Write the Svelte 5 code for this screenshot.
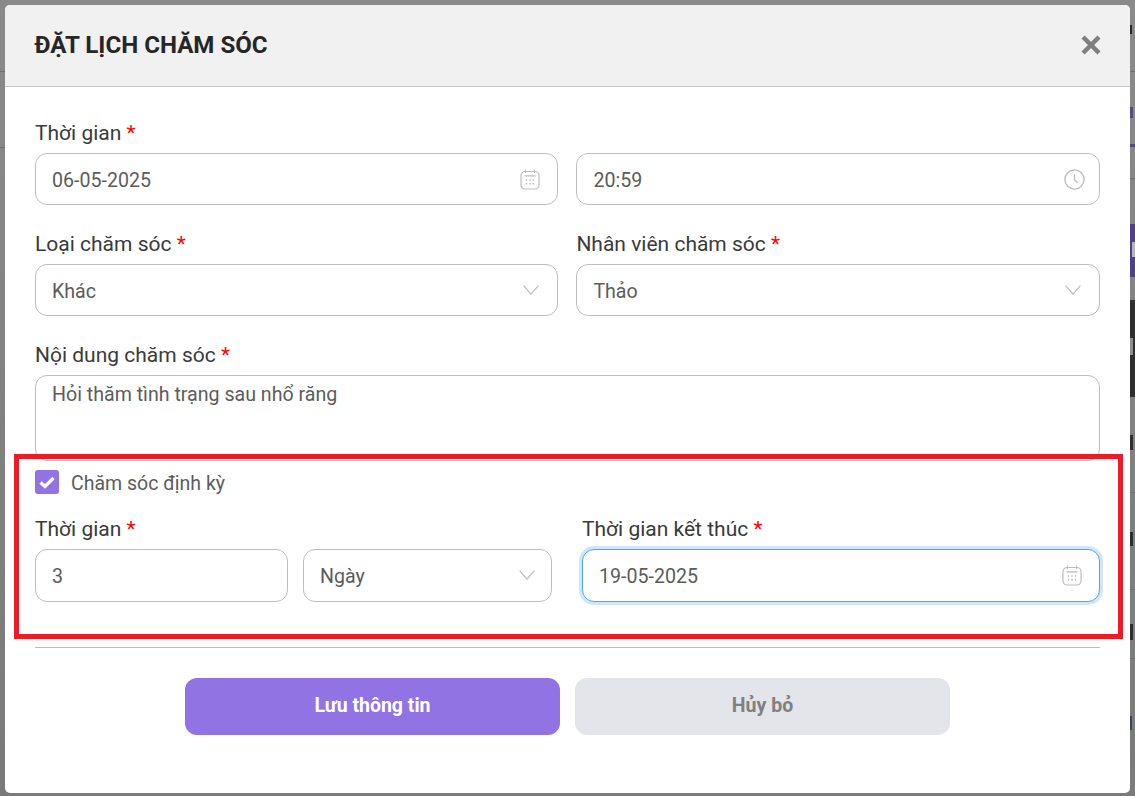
<script>
  const close = () => {};
</script>

{#snippet calendar()}
  <svg class="icon" width="20" height="21" viewBox="0 0 20 21" fill="none" stroke="#bdbdbd" stroke-width="1.2">
    <rect x="1" y="2.5" width="18" height="17.5" rx="4" />
    <path d="M5.5 .6v3.4M14.5 .6v3.4M4.5 6.8h11" />
    <path d="M5.8 11h8.4M5.8 14.8h8.4" stroke-width="1.5" stroke-dasharray="1.4 2.1" />
  </svg>
{/snippet}

{#snippet chevron()}
  <svg class="icon chevron" width="16" height="10" viewBox="0 0 16 10" fill="none" stroke="#bdbdbd" stroke-width="1.2">
    <path d="M.6 .6 8 9.2l7.4-8.6" />
  </svg>
{/snippet}

<div class="backdrop">
  <div class="modal">
    <header class="modal-head">
      <h2>ĐẶT LỊCH CHĂM SÓC</h2>
      <button class="close" onclick={close} aria-label="Đóng">
        <svg width="20" height="20" viewBox="0 0 20 20" fill="none" stroke="#7f7f7f" stroke-width="4.4" stroke-linecap="square">
          <path d="M3.6 3.6l12.8 12.8M16.4 3.6L3.6 16.4" />
        </svg>
      </button>
    </header>

    <div class="modal-body">
      <div class="field">
        <span class="label">Thời gian <i>*</i></span>
        <div class="two">
          <div class="input"><span>06-05-2025</span>{@render calendar()}</div>
          <div class="input">
            <span>20:59</span>
            <svg class="icon clock" width="21" height="21" viewBox="0 0 21 21" fill="none" stroke="#bdbdbd" stroke-width="1.4">
              <circle cx="10.5" cy="10.5" r="9.6" />
              <path d="M10.5 5v6l3.4 2.6" />
            </svg>
          </div>
        </div>
      </div>

      <div class="two">
        <div class="field">
          <span class="label">Loại chăm sóc <i>*</i></span>
          <div class="input"><span>Khác</span>{@render chevron()}</div>
        </div>
        <div class="field">
          <span class="label">Nhân viên chăm sóc <i>*</i></span>
          <div class="input"><span>Thảo</span>{@render chevron()}</div>
        </div>
      </div>

      <div class="field">
        <span class="label">Nội dung chăm sóc <i>*</i></span>
        <div class="input area"><span>Hỏi thăm tình trạng sau nhổ răng</span></div>
      </div>

      <div class="periodic">
        <div class="check-row">
          <span class="checkbox">
            <svg width="16" height="13" viewBox="0 0 16 13" fill="none" stroke="#fff" stroke-width="3.4">
              <path d="M1.5 6.5l4.5 4 8.5-8.5" />
            </svg>
          </span>
          <span class="check-text">Chăm sóc định kỳ</span>
        </div>
        <div class="period-row">
          <div class="field">
            <span class="label">Thời gian <i>*</i></span>
            <div class="pair">
              <div class="input tall"><span>3</span></div>
              <div class="input tall"><span>Ngày</span>{@render chevron()}</div>
            </div>
          </div>
          <div class="field">
            <span class="label">Thời gian kết thúc <i>*</i></span>
            <div class="input tall focused"><span>19-05-2025</span>{@render calendar()}</div>
          </div>
        </div>
      </div>

      <div class="actions">
        <button class="btn primary">Lưu thông tin</button>
        <button class="btn muted">Hủy bỏ</button>
      </div>
    </div>
  </div>
</div>

<style>
  :global(body) {
    margin: 0;
    font-family: Roboto, "Liberation Sans", sans-serif;
  }

  /* the page behind the modal only shows as thin strips along the edges */
  .backdrop {
    width: 1135px;
    height: 796px;
    box-sizing: border-box;
    padding: 5px 5px 3px;
    overflow: hidden;
    background:
      linear-gradient(#22262e, #22262e) 1130px 25px / 2px 9px no-repeat,
      linear-gradient(#6f6f6f, #6f6f6f) 0 71px / 100% 1px no-repeat,
      linear-gradient(#544a86, #544a86) 1130px 107px / 3px 11px no-repeat,
      linear-gradient(#55488f, #55488f) 1130px 144px / 5px 3px no-repeat,
      linear-gradient(#6f6f6f, #6f6f6f) 0 147px / 5px 1px no-repeat,
      linear-gradient(#6f6f6f, #6f6f6f) 1130px 178px / 5px 1px no-repeat,
      linear-gradient(#b5b5b5, #b5b5b5) 1132px 242px / 3px 15px no-repeat,
      linear-gradient(#4f3f8f, #4f3f8f) 1130px 224px / 5px 53px no-repeat,
      linear-gradient(#8e8e8e, #8e8e8e) 1130px 338px / 3px 17px no-repeat,
      linear-gradient(#2e2e2e, #2e2e2e) 1130px 300px / 5px 97px no-repeat,
      linear-gradient(#2e2e2e, #2e2e2e) 1130px 435px / 3px 15px no-repeat,
      linear-gradient(#6f6f6f, #6f6f6f) 1130px 492px / 5px 1px no-repeat,
      linear-gradient(#2e2e2e, #2e2e2e) 1130px 532px / 3px 14px no-repeat,
      linear-gradient(#6f6f6f, #6f6f6f) 1130px 589px / 5px 1px no-repeat,
      linear-gradient(#2e2e2e, #2e2e2e) 1130px 624px / 3px 16px no-repeat,
      linear-gradient(#6f6f6f, #6f6f6f) 1130px 658px / 5px 1px no-repeat,
      linear-gradient(#37465c, #37465c) 1130px 716px / 2px 14px no-repeat,
      linear-gradient(#8a8a8a, #7f807f 60%, #7a7a7a);
  }

  .modal {
    height: 100%;
    background: #fff;
    border-radius: 5px;
    overflow: hidden;
  }

  .modal-head {
    height: 82px;
    box-sizing: border-box;
    border-bottom: 1px solid #c4c4c4;
    background: #f1f1f1;
    padding: 0 29px 2px 29.5px;
    display: flex;
    align-items: center;
    justify-content: space-between;
  }

  h2 {
    margin: 0;
    font-size: 24.1px;
    font-weight: 700;
    color: #262626;
  }

  .close {
    border: 0;
    padding: 0;
    background: none;
    display: flex;
  }

  .modal-body {
    padding: 34px 30px 0;
    display: flex;
    flex-direction: column;
    gap: 27px;
  }

  .field {
    display: flex;
    flex-direction: column;
    gap: 8px;
  }

  .label {
    font-size: 21px;
    line-height: 24px;
    color: #3a3a3a;
  }

  .label i {
    font-style: normal;
    color: #f00;
  }

  .two {
    display: grid;
    grid-template-columns: 523.4px 1fr;
    gap: 18px;
  }

  .input {
    height: 52px;
    box-sizing: border-box;
    border: 1px solid #bdbdbd;
    border-radius: 12px;
    padding: 0 17px 0 16px;
    display: flex;
    align-items: center;
    justify-content: space-between;
    font-size: 19.6px;
    color: #5c5c5c;
    background: #fff;
  }

  .input > span {
    padding-top: 2px;
  }

  .tall {
    height: 53px;
  }

  .area {
    height: 86px;
    align-items: flex-start;
    padding-top: 5px;
  }

  .icon {
    flex: none;
  }

  .clock {
    margin-right: -3px;
  }

  .chevron {
    margin-right: 1px;
  }

  .pair .chevron {
    margin: 0 -1px 2px 0;
  }

  .periodic {
    position: relative;
    margin-top: -27px;
    display: flex;
    flex-direction: column;
  }

  /* red annotation frame drawn over the screenshot */
  .periodic::after {
    content: "";
    position: absolute;
    inset: -7px -23px -37px -21px;
    border: 5px solid #ed1c24;
    pointer-events: none;
  }

  .check-row {
    display: flex;
    align-items: flex-start;
    gap: 12px;
    margin-top: 9px;
    font-size: 19.5px;
    color: #5c5c5c;
    line-height: 24px;
  }

  .check-text {
    padding-top: 2px;
  }

  .checkbox {
    width: 24px;
    height: 24px;
    border-radius: 3px;
    background: #9173e4;
    display: flex;
    align-items: center;
    justify-content: center;
  }

  .period-row {
    margin-top: 21px;
    display: grid;
    grid-template-columns: 517px 518px;
    gap: 30px;
  }

  .pair {
    display: grid;
    grid-template-columns: 253px 249px;
    gap: 15px;
  }

  .actions {
    margin-top: 18px;
    border-top: 1px solid #bdbdbd;
    padding-top: 30px;
    display: flex;
    justify-content: center;
    gap: 15px;
  }

  .btn {
    width: 375px;
    height: 57px;
    border: 0;
    border-radius: 12px;
    padding: 0 0 2px;
    font-family: inherit;
    font-size: 19.5px;
    font-weight: 700;
  }

  .primary {
    background: #9173e4;
    color: #fff;
  }

  .muted {
    background: #e4e5ea;
    color: #808080;
  }

  .focused {
    border-color: #4ea5f0;
    box-shadow: 0 0 0 3px #cfe7fb;
  }
</style>
